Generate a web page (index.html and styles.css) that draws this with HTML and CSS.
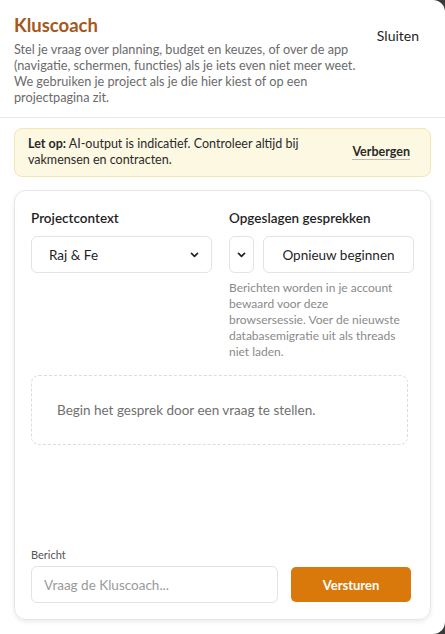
FILE: index.html
```html
<!DOCTYPE html>
<html lang="nl">
<head>
    <meta charset="UTF-8">
    <title>Kluscoach</title>
    <link rel="stylesheet" href="styles.css">
</head>
<body>
    <div class="panel">
        <header class="panel_head">
            <div class="head_text">
                <h1>Kluscoach</h1>
                <p>Stel je vraag over planning, budget en keuzes, of over de app (navigatie, schermen, functies) als je iets even niet meer weet. We gebruiken je project als je die hier kiest of op een projectpagina zit.</p>
            </div>
            <a class="close" href="javascript:void(0);">Sluiten</a>
        </header>
        <div class="panel_body">
            <div class="notice">
                <p><b>Let op:</b> AI-output is indicatief. Controleer altijd bij vakmensen en contracten.</p>
                <a href="javascript:void(0);">Verbergen</a>
            </div>
            <section class="chat">
                <div class="chat_top">
                    <div class="field">
                        <label>Projectcontext</label>
                        <div class="select wide">
                            <span>Raj &amp; Fe</span>
                            <svg width="9" height="6" viewBox="0 0 10 7"><path d="M1.5 1.5 5 5 8.5 1.5" fill="none" stroke="#222" stroke-width="2" stroke-linecap="round" stroke-linejoin="round"/></svg>
                        </div>
                    </div>
                    <div class="field">
                        <label>Opgeslagen gesprekken</label>
                        <div class="row">
                            <div class="select small">
                                <svg width="9" height="6" viewBox="0 0 10 7"><path d="M1.5 1.5 5 5 8.5 1.5" fill="none" stroke="#222" stroke-width="2" stroke-linecap="round" stroke-linejoin="round"/></svg>
                            </div>
                            <button class="restart">Opnieuw beginnen</button>
                        </div>
                        <p class="hint">Berichten worden in je account bewaard voor deze browsersessie. Voer de nieuwste databasemigratie uit als threads niet laden.</p>
                    </div>
                </div>
                <div class="messages">
                    <div class="empty">Begin het gesprek door een vraag te stellen.</div>
                </div>
                <div class="compose">
                    <label>Bericht</label>
                    <div class="row">
                        <input type="text" placeholder="Vraag de Kluscoach...">
                        <button class="send">Versturen</button>
                    </div>
                </div>
            </section>
        </div>
    </div>
</body>
</html>
```
FILE: styles.css
```css
*{
    margin:0;
    padding:0;
    box-sizing: border-box;
}
body{
    background-color: #3a3a3a;
    font-family: Lato, "Noto Sans", sans-serif;
    color: #1f1f1f;
}
a{
    text-decoration: none;
    color: inherit;
}
.panel{
    height: 634px;
    background-color: #fff;
    border-radius: 0 12px 12px 0;
    display: flex;
    flex-direction: column;
}
.panel_head{
    display: flex;
    justify-content: space-between;
    padding: 13px 14px 12px 14px;
    border-bottom: 1px solid #e8e8e8;
}
.head_text{
    width: 345px;
}
.panel_head h1{
    font-size: 18.5px;
    font-weight: 700;
    color: #a5581b;
    line-height: 24px;
    margin-bottom: 4px;
}
.panel_head p{
    font-size: 12.7px;
    line-height: 16px;
    color: #6b6b6b;
}
.close{
    font-size: 14px;
    margin-top: 14px;
    margin-right: 12px;
}
.panel_body{
    flex: 1;
    display: flex;
    flex-direction: column;
    padding: 10px 14px 14px 14px;
}
.notice{
    display: flex;
    align-items: center;
    justify-content: space-between;
    background-color: #fdf8e2;
    border: 1px solid #f1e6b4;
    border-radius: 8px;
    padding: 7px 20px 8px 13px;
    font-size: 12.5px;
    line-height: 16px;
    color: #2a2a2a;
}
.notice p{
    width: 290px;
}
.notice a{
    font-weight: 700;
    border-bottom: 1px solid #bbb;
    line-height: 14px;
}
.chat{
    flex: 1;
    margin-top: 13px;
    border: 1px solid #e6e6e6;
    border-radius: 12px;
    box-shadow: 0 2px 4px rgba(0,0,0,0.08);
    padding: 17px 16px 16px 16px;
    display: flex;
    flex-direction: column;
}
.chat_top{
    display: grid;
    grid-template-columns: 181px 1fr;
    gap: 17px;
}
.field label{
    display: block;
    font-size: 13.5px;
    font-weight: 600;
    line-height: 20px;
    margin-bottom: 8px;
}
.row{
    display: flex;
    gap: 9px;
}
.select{
    height: 37px;
    border: 1px solid #e3e3e3;
    border-radius: 6px;
    display: flex;
    align-items: center;
    font-size: 13.5px;
}
.select.wide{
    justify-content: space-between;
    padding: 0 12px 0 17px;
}
.select.small{
    width: 25px;
    justify-content: center;
}
.restart{
    flex: 1;
    height: 37px;
    border: 1px solid #e3e3e3;
    border-radius: 6px;
    background-color: #fff;
    font-family: inherit;
    font-size: 13.5px;
    color: #1f1f1f;
}
.hint{
    width: 175px;
    font-size: 12px;
    line-height: 16px;
    color: #8a8a8a;
    margin-top: 7px;
}
.messages{
    flex: 1;
    padding: 15px 6px 0 0;
}
.empty{
    height: 70px;
    border: 1px dashed #dcdcdc;
    border-radius: 8px;
    padding-left: 25px;
    display: flex;
    align-items: center;
    font-size: 13.5px;
    color: #707070;
}
.compose label{
    display: block;
    font-size: 11px;
    color: #555;
    line-height: 14px;
    margin-bottom: 4px;
}
.compose .row{
    gap: 13px;
    align-items: center;
}
.compose input{
    width: 247px;
    height: 37px;
    border: 1px solid #e3e3e3;
    border-radius: 6px;
    padding-left: 12px;
    font-family: inherit;
    font-size: 13.5px;
}
.compose input::placeholder{
    color: #9a9a9a;
}
.send{
    width: 120px;
    height: 35px;
    border: none;
    border-radius: 5px;
    background-color: #d9790c;
    color: #fff;
    font-family: inherit;
    font-weight: 700;
    font-size: 13px;
}
```
